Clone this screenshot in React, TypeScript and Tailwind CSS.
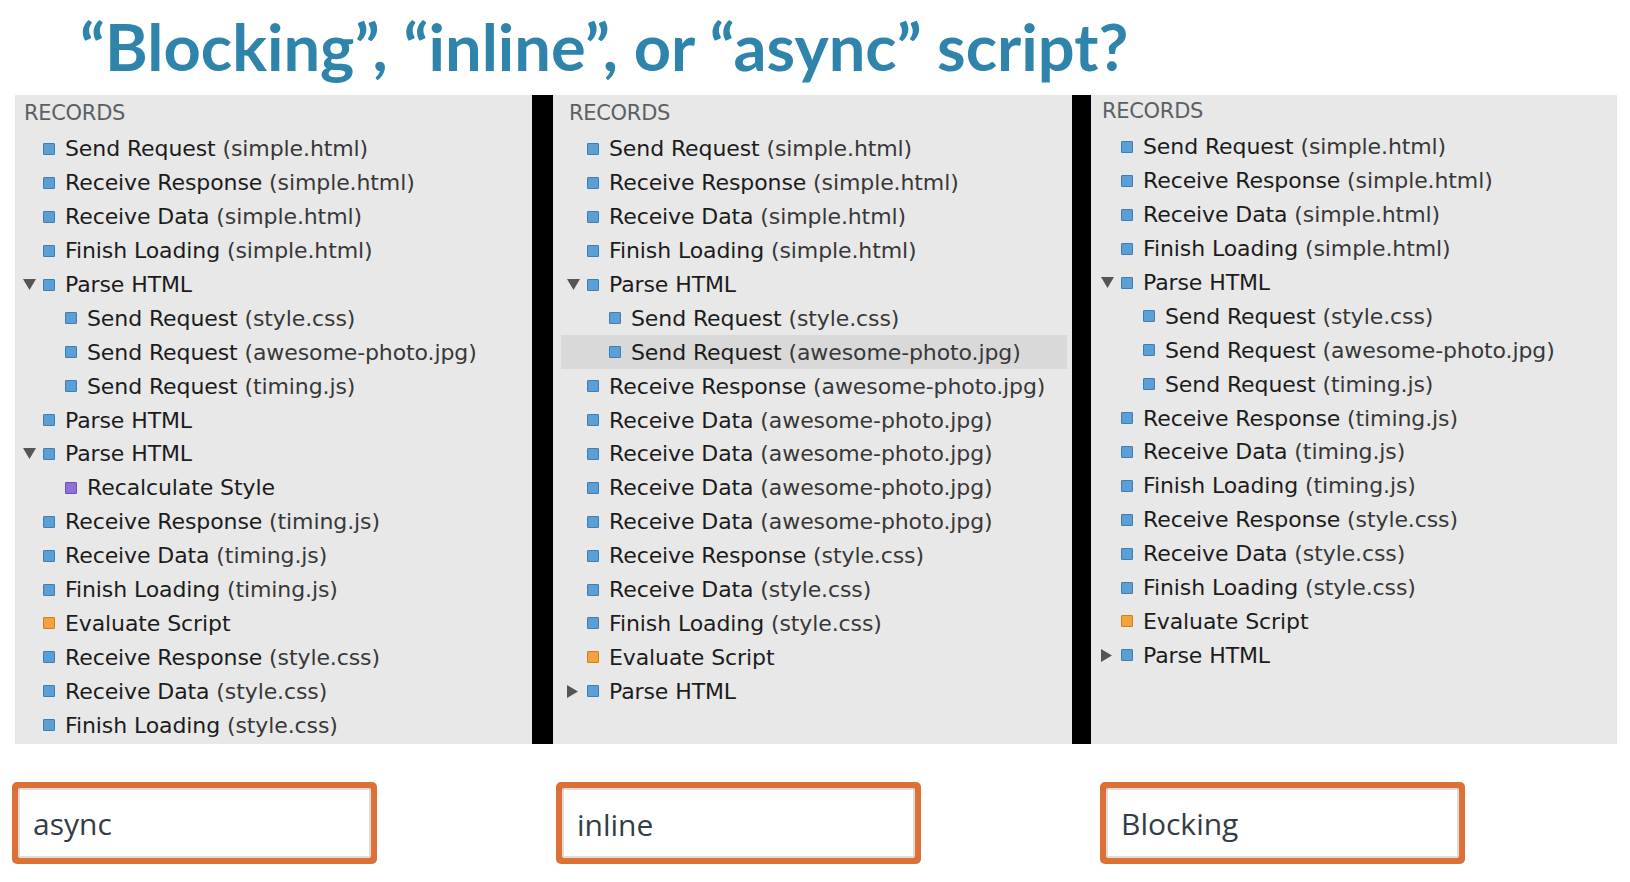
import React from "react";

type Color = "blue" | "purple" | "orange";
type Row = { name: string; file?: string; color?: Color; level?: number; tri?: "down" | "right"; hl?: boolean };

const r = (name: string, file?: string, extra: Partial<Row> = {}): Row => ({ name, file, color: "blue", level: 0, ...extra });

const left: Row[] = [
  r("Send Request", "simple.html"),
  r("Receive Response", "simple.html"),
  r("Receive Data", "simple.html"),
  r("Finish Loading", "simple.html"),
  r("Parse HTML", undefined, { tri: "down" }),
  r("Send Request", "style.css", { level: 1 }),
  r("Send Request", "awesome-photo.jpg", { level: 1 }),
  r("Send Request", "timing.js", { level: 1 }),
  r("Parse HTML"),
  r("Parse HTML", undefined, { tri: "down" }),
  r("Recalculate Style", undefined, { level: 1, color: "purple" }),
  r("Receive Response", "timing.js"),
  r("Receive Data", "timing.js"),
  r("Finish Loading", "timing.js"),
  r("Evaluate Script", undefined, { color: "orange" }),
  r("Receive Response", "style.css"),
  r("Receive Data", "style.css"),
  r("Finish Loading", "style.css"),
];

const middle: Row[] = [
  r("Send Request", "simple.html"),
  r("Receive Response", "simple.html"),
  r("Receive Data", "simple.html"),
  r("Finish Loading", "simple.html"),
  r("Parse HTML", undefined, { tri: "down" }),
  r("Send Request", "style.css", { level: 1 }),
  r("Send Request", "awesome-photo.jpg", { level: 1, hl: true }),
  r("Receive Response", "awesome-photo.jpg"),
  r("Receive Data", "awesome-photo.jpg"),
  r("Receive Data", "awesome-photo.jpg"),
  r("Receive Data", "awesome-photo.jpg"),
  r("Receive Data", "awesome-photo.jpg"),
  r("Receive Response", "style.css"),
  r("Receive Data", "style.css"),
  r("Finish Loading", "style.css"),
  r("Evaluate Script", undefined, { color: "orange" }),
  r("Parse HTML", undefined, { tri: "right" }),
];

const right: Row[] = [
  r("Send Request", "simple.html"),
  r("Receive Response", "simple.html"),
  r("Receive Data", "simple.html"),
  r("Finish Loading", "simple.html"),
  r("Parse HTML", undefined, { tri: "down" }),
  r("Send Request", "style.css", { level: 1 }),
  r("Send Request", "awesome-photo.jpg", { level: 1 }),
  r("Send Request", "timing.js", { level: 1 }),
  r("Receive Response", "timing.js"),
  r("Receive Data", "timing.js"),
  r("Finish Loading", "timing.js"),
  r("Receive Response", "style.css"),
  r("Receive Data", "style.css"),
  r("Finish Loading", "style.css"),
  r("Evaluate Script", undefined, { color: "orange" }),
  r("Parse HTML", undefined, { tri: "right" }),
];

function Square({ color }: { color: Color }) {
  const cls =
    color === "blue"
      ? "bg-[#5aa0d6] border-[#3f7db3]"
      : color === "purple"
      ? "bg-[#8c72d6] border-[#6a52b5]"
      : "bg-[#f2a43c] border-[#d07d1e]";
  return <span className={`block w-[12px] h-[12px] border rounded-[1px] shrink-0 ${cls}`} />;
}

function Tri({ dir }: { dir?: "down" | "right" }) {
  return (
    <span className="w-[20px] shrink-0 flex items-center">
      {dir === "down" && (
        <svg width="13" height="11" viewBox="0 0 13 11">
          <polygon points="0,0 13,0 6.5,11" fill="#555" />
        </svg>
      )}
      {dir === "right" && (
        <svg width="11" height="13" viewBox="0 0 11 13">
          <polygon points="0,0 11,6.5 0,13" fill="#555" />
        </svg>
      )}
    </span>
  );
}

function RowView({ row, hlCls }: { row: Row; hlCls: string }) {
  return (
    <div className={`flex items-center h-[33.9px] ${row.hl ? hlCls : ""}`}>
      <Tri dir={row.tri} />
      {row.level === 1 && <span className="w-[22px] shrink-0" />}
      <Square color={row.color ?? "blue"} />
      <span className="ml-[10px] whitespace-nowrap text-[22px] tracking-[-0.1px] text-[#1c1c1c]">
        {row.name}
        {row.file && <span className="text-[#383838]"> ({row.file})</span>}
      </span>
    </div>
  );
}

function Panel({ rows, pad, recPad, top, hlCls, cls }: { rows: Row[]; pad: string; recPad: string; top: string; hlCls: string; cls: string }) {
  return (
    <div className={`flex flex-col ${top} ${cls}`}>
      <div className={`text-[21px] leading-[24px] text-[#5b6065] tracking-[-0.3px] ${recPad}`}>RECORDS</div>
      <div className={`mt-[7px] ${pad}`}>
        {rows.map((row, i) => (
          <RowView key={i} row={row} hlCls={hlCls} />
        ))}
      </div>
    </div>
  );
}

export default function App() {
  return (
    <div className="w-[1630px] h-[882px] bg-white overflow-hidden" style={{ fontFamily: '"DejaVu Sans", sans-serif' }}>
      <div className="h-[95px] pl-[80px] pt-[1px]">
        <h1
          className="text-[65px] font-bold leading-[90px] text-[#2f84ab] whitespace-nowrap"
          style={{ fontFamily: 'Lato, "Open Sans", sans-serif' }}
        >
          “Blocking”, “inline”, or “async” script?
        </h1>
      </div>
      <div className="ml-[15px] w-[1602px] h-[649px] bg-[#e8e8e8] flex">
        <Panel rows={left} pad="pl-[8px]" recPad="pl-[9px]" top="pt-[6px]" hlCls="" cls="w-[517px]" />
        <div className="w-[21px] bg-black" />
        <Panel rows={middle} pad="pl-[14px]" recPad="pl-[16px]" top="pt-[6px]" hlCls="bg-[#d9d9d9] -ml-[6px] pl-[6px] mr-[5px]" cls="w-[519px]" />
        <div className="w-[19px] bg-black" />
        <Panel rows={right} pad="pl-[10px]" recPad="pl-[11px]" top="pt-[4px]" hlCls="" cls="flex-1" />
      </div>
      <div className="flex gap-[179px] pl-[12px] mt-[38px]" style={{ fontFamily: '"Open Sans", sans-serif' }}>
        {[
          { t: "async", pt: "pt-[0px]" },
          { t: "inline", pt: "pt-[2px]" },
          { t: "Blocking", pt: "pt-[0px]" },
        ].map((b) => (
          <div key={b.t} className="w-[365px] h-[82px] rounded-[5px] bg-[#dc7138] p-[6px]">
            <div className={`w-full h-full bg-white rounded-[2px] border-2 border-[#dedede] flex items-center pl-[13px] ${b.pt}`}>
              <span className="text-[30px] text-[#343d46]">{b.t}</span>
            </div>
          </div>
        ))}
      </div>
    </div>
  );
}
